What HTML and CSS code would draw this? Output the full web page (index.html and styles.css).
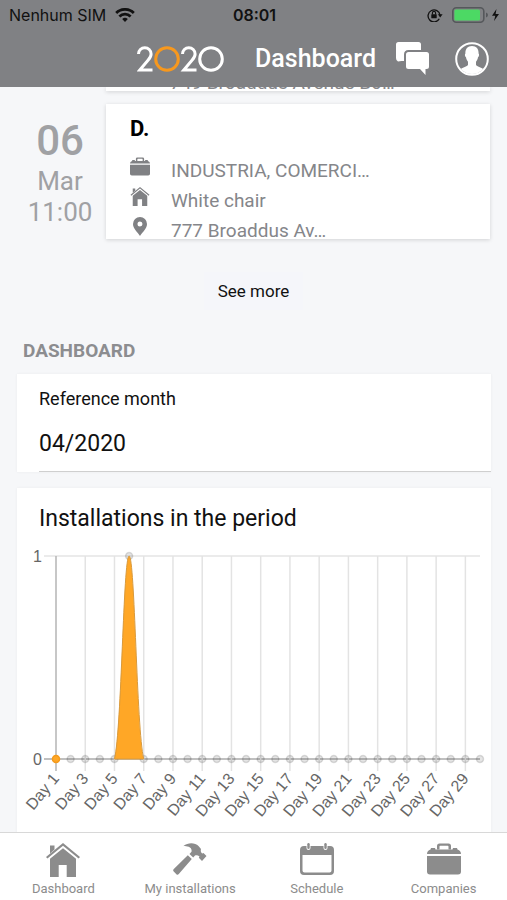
FILE: index.html
```html
<!DOCTYPE html>
<html lang="en">
<head>
    <meta charset="UTF-8">
    <meta name="viewport" content="width=device-width, initial-scale=1">
    <title>Dashboard</title>
    <link rel="stylesheet" href="styles.css">
</head>
<body>

<!-- shared icons -->
<svg class="sprite" aria-hidden="true">
    <symbol id="icon-home" viewBox="0 0 34 34">
        <path d="M4 2.500h4.500v4L4 10.500z"/>
        <path d="M0 14L17 0l17 14-1.400 1.600L17 2.800 1.400 15.600z"/>
        <path d="M17 5.200L30 15.800V34h-9.300V22h-8v12H4V15.800z"/>
    </symbol>
    <symbol id="icon-case" viewBox="0 0 34 31">
        <path d="M10 6V2.500Q10 0 12.500 0h9Q24 0 24 2.500V6h-2.500V3q0-.8-.8-.8h-7.400q-.8 0-.8.8v3z"/>
        <path d="M0 10.500Q0 7 3.500 6l.5-1.500h4L8.500 6h17l.5-1.500h4l.5 1.500q3.500 1 3.500 4.500z"/>
        <path d="M0 12.500h34V28q0 3-3 3H3q-3 0-3-3z"/>
    </symbol>
</svg>

<header class="header">
    <div class="status">
        <div class="status-side">
            <span>Nenhum SIM</span>
            <svg class="wifi" viewBox="0 0 20 14" aria-hidden="true">
                <g fill="none" stroke="#111" stroke-width="2.800">
                    <path d="M1.200 5a12.500 12.500 0 0 1 17.600 0"/>
                    <path d="M4.400 8.500a8 8 0 0 1 11.200 0"/>
                </g>
                <path fill="#111" d="M7.200 11a4 4 0 0 1 5.600 0L10 14z"/>
            </svg>
        </div>
        <span class="clock">08:01</span>
        <div class="status-side right">
            <svg class="lock" viewBox="0 0 16 14" aria-hidden="true">
                <path d="M12.300 10.800A6 6 0 1 1 13 7" fill="none" stroke="#111" stroke-width="1.300"/>
                <path d="M10.800 6.300h4.800L13.200 9.500z" fill="#111"/>
                <rect x="4.300" y="6.300" width="5.400" height="4" rx=".5" fill="#111"/>
                <path d="M5.400 6.500V5a1.600 1.600 0 0 1 3.200 0v1.500" fill="none" stroke="#111" stroke-width="1.100"/>
            </svg>
            <svg class="battery" viewBox="0 0 48 16" aria-hidden="true">
                <rect x=".8" y=".8" width="31" height="14.400" rx="3.500" fill="none" stroke="#55585b" stroke-width="1.600"/>
                <rect x="2.400" y="2.400" width="25.600" height="11.200" rx="1.500" fill="#4cd964"/>
                <path d="M34 5.500q2 .7 2 2.500t-2 2.500z" fill="#55585b"/>
                <path d="M44.500 2L40 8.800h3.300L42 14l5-7h-3.400z" fill="#111"/>
            </svg>
        </div>
    </div>
    <div class="toolbar">
        <svg class="logo" viewBox="0 0 87 26" role="img" aria-label="2020">
            <g fill="none" stroke="#fff" stroke-width="3">
                <path d="M1.500 8a6.300 6.300 0 0 1 12.600 0c0 3-1.500 4.500-3.500 6.800L2.800 24H15.500"/>
                <path d="M45.500 8a6.300 6.300 0 0 1 12.600 0c0 3-1.500 4.500-3.500 6.800L46.800 24H59.500"/>
                <circle cx="74" cy="13" r="11.300"/>
                <circle cx="30" cy="13" r="11.300" stroke="#f7981d"/>
            </g>
        </svg>
        <h1 class="title">Dashboard</h1>
        <button class="icon-btn" aria-label="Messages">
            <svg class="chat" viewBox="0 0 34 34" fill="#fff" aria-hidden="true">
                <path d="M2.500 0h20Q25 0 25 2.500V8H12.500Q8 8 8 12.500V19H5.500L2 19.500Q0 19 0 16V2.500Q0 0 2.500 0z"/>
                <path d="M12.500 10h18Q33 10 33 12.500v12q0 2.500-2.500 2.500H29.500v6L24 27H12.500Q10 27 10 24.500v-12Q10 10 12.500 10z"/>
            </svg>
        </button>
        <button class="icon-btn" aria-label="Profile">
            <svg class="user" viewBox="0 0 34 34" aria-hidden="true">
                <circle cx="17" cy="17" r="15.800" fill="none" stroke="#fff" stroke-width="2"/>
                <path fill="#fff" d="M17 4c4.500 0 6.800 3 6.600 7.500.8.400.6 3.300-.6 3.800-.4 2-1 3.300-2 4.500v3c.7 2 5.500 2.600 7.200 4.200A15 15 0 0 1 17 32 15 15 0 0 1 5.800 27c1.700-1.600 6.500-2.200 7.200-4.200v-3c-1-1.200-1.600-2.500-2-4.500-1.200-.5-1.400-3.400-.6-3.800C10.200 7 12.500 4 17 4z"/>
            </svg>
        </button>
    </div>
</header>

<main class="content">
    <div class="visit">
        <div class="card previous">
            <span>749 Broaddus Avenue Bo…</span>
        </div>
    </div>
    <div class="visit">
        <div class="date">
            <strong>06</strong>
            <span>Mar</span>
            <span>11:00</span>
        </div>
        <div class="card">
            <h2>D.</h2>
            <ul>
                <li><svg class="case"><use href="#icon-case"/></svg><span>INDUSTRIA, COMERCI…</span></li>
                <li><svg class="home"><use href="#icon-home"/></svg><span>White chair</span></li>
                <li>
                    <svg class="pin" viewBox="0 0 14 19"><path fill-rule="evenodd" d="M7 0a7 7 0 0 1 7 7c0 4.500-4.500 8-7 12C4.500 15 0 11.500 0 7a7 7 0 0 1 7-7zm0 4.500a2.500 2.500 0 1 0 0 5 2.500 2.500 0 0 0 0-5z"/></svg>
                    <span>777 Broaddus Av…</span>
                </li>
            </ul>
        </div>
    </div>

    <button class="more">See more</button>

    <h3 class="section">DASHBOARD</h3>

    <div class="panel month">
        <label for="month">Reference month</label>
        <input type="text" id="month" value="04/2020">
    </div>

    <div class="panel period">
        <h2>Installations in the period</h2>
        <svg id="chart" role="img" aria-label="Installations per day"></svg>
    </div>
</main>

<nav class="tabs">
    <a href="#dashboard">
        <svg class="tab-home" aria-hidden="true"><use href="#icon-home"/></svg>
        <span>Dashboard</span>
    </a>
    <a href="#installations">
        <svg class="tab-hammer" viewBox="0 0 34 32" aria-hidden="true">
            <path d="M10.500 3C15-.8 22-.6 25.500 3L28 6c-.6 2 0 3.500 1.300 4.600l1.200-.7 3 3.100-4.500 5-3.200-3.200.7-1.300c-1.500-1.300-3-1.500-4.500-1l-1.800 2-3.700-3.500 2-2.200c.5-2.300-.5-4-2.800-5C14 3.200 12.300 3.500 10.500 3z"/>
            <path d="M14.800 12.300l4 3.800L5.800 31q-1.200 1.300-2.400.2L.7 28.500q-1.200-1.300.1-2.500z"/>
            <path d="M15 11l5.500 5.300" stroke="#fff" stroke-width=".8"/>
        </svg>
        <span>My installations</span>
    </a>
    <a href="#schedule">
        <svg class="tab-calendar" viewBox="0 0 34 32" aria-hidden="true">
            <path fill-rule="evenodd" d="M4 3h2.500v2a2 2 0 0 0 4 0V3h13v2a2 2 0 0 0 4 0V3H30q4 0 4 4v21q0 4-4 4H4q-4 0-4-4V7q0-4 4-4zM2.500 12v15.500q0 2 2 2h25q2 0 2-2V12z"/>
            <rect x="7.300" y="0" width="2.400" height="6" rx="1.200"/>
            <rect x="24.300" y="0" width="2.400" height="6" rx="1.200"/>
        </svg>
        <span>Schedule</span>
    </a>
    <a href="#companies">
        <svg class="tab-case" aria-hidden="true"><use href="#icon-case"/></svg>
        <span>Companies</span>
    </a>
</nav>

<script src="chart.js"></script>
</body>
</html>
```
FILE: styles.css
```css
* {
    box-sizing: border-box;
}
body {
    font-family: Roboto, sans-serif;
    background: #f6f7f9;
    margin: 0;
    height: 100vh;
    display: flex;
    flex-direction: column;
    color: #111;
}
h1, h2, h3, ul {
    margin: 0;
    padding: 0;
}
button {
    font-family: inherit;
    border: none;
    background: none;
    padding: 0;
    cursor: pointer;
}
.sprite {
    display: none;
}

/* header */
.header {
    background: #808184;
    flex: none;
}
.status {
    display: flex;
    align-items: center;
    height: 30px;
    padding: 0 7px 0 9px;
    font-family: Inter, sans-serif;
    font-size: 16px;
}
.status-side {
    flex: 1;
    display: flex;
    align-items: center;
    gap: 9px;
}
.status-side.right {
    justify-content: flex-end;
}
.clock {
    font-weight: 600;
}
.wifi {
    width: 20px;
    height: 14px;
}
.lock {
    width: 16px;
    height: 14px;
}
.battery {
    width: 48px;
    height: 16px;
}
.toolbar {
    display: flex;
    align-items: center;
    justify-content: flex-end;
    height: 57px;
    padding: 0 18px 0 16px;
}
.logo {
    width: 87px;
    height: 26px;
    margin-right: 31px;
}
.title {
    color: #fff;
    font-size: 25px;
    font-weight: 500;
    margin-right: 20px;
}
.icon-btn {
    display: flex;
}
.icon-btn + .icon-btn {
    margin-left: 25px;
}
.icon-btn svg {
    width: 34px;
    height: 34px;
}

/* visits */
.content {
    flex: 1;
    min-height: 0;
    overflow: hidden;
}
.visit {
    display: flex;
    justify-content: flex-end;
    padding: 0 17px 0 16px;
    margin-bottom: 13px;
}
.date {
    width: 90px;
    padding: 12px 2px 0 0;
    display: flex;
    flex-direction: column;
    align-items: center;
    color: #a0a1a4;
    font-size: 26px;
    line-height: 31px;
}
.date strong {
    font-size: 42px;
    font-weight: 500;
    line-height: 50px;
}
.card {
    flex: 1;
    height: 135px;
    padding: 12px 24px 0;
    background: #fff;
    overflow: hidden;
    box-shadow: 0 1px 4px rgba(0, 0, 0, 0.15);
    color: #85868a;
    font-size: 19px;
}
.card.previous {
    display: flex;
    align-items: flex-end;
    height: 4px;
    margin-left: 90px;
    padding: 0 64px;
    line-height: 16px;
}
.card h2 {
    color: #000;
    font-size: 22px;
    font-weight: 700;
    line-height: 26px;
    margin-bottom: 13px;
}
.card li {
    display: flex;
    align-items: center;
    height: 30px;
}
.card li svg {
    width: 20px;
    height: 19px;
    margin-right: 21px;
    margin-bottom: 8px;
    fill: #808184;
}
.more {
    display: block;
    margin: 33px auto 0;
    padding: 0 14px;
    height: 38px;
    font-size: 17px;
    color: #111;
    background: #f5f6fa;
}
.section {
    margin: 31px 23px 13px;
    font-size: 19px;
    font-weight: 700;
    line-height: 20px;
    color: #8c8d90;
}

/* panels */
.panel {
    margin: 0 16px 16px 17px;
    background: #fff;
    box-shadow: 0 0 3px rgba(0, 0, 0, 0.05);
}
.month {
    padding: 14px 0 0 22px;
}
.month label {
    display: block;
    font-size: 18px;
    line-height: 21px;
}
.month input {
    display: block;
    width: 100%;
    height: 63px;
    padding: 12px 0 5px;
    border: none;
    border-bottom: 1px solid #cfcfcf;
    background: none;
    color: #111;
    font-family: inherit;
    font-size: 23px;
    outline: none;
}
.period {
    padding-top: 17px;
    min-height: 360px;
}
.period h2 {
    margin-left: 22px;
    font-size: 23px;
    font-weight: 400;
    line-height: 28px;
}
#chart {
    display: block;
    width: 100%;
    height: 300px;
}
#chart text {
    font-family: "Liberation Sans", sans-serif;
    font-size: 16px;
    fill: #666;
}

/* tabs */
.tabs {
    flex: none;
    display: grid;
    grid-template-columns: repeat(4, 1fr);
    height: 68px;
    background: #fff;
    border-top: 1px solid #d8d8d8;
}
.tabs a {
    display: flex;
    flex-direction: column;
    align-items: center;
    gap: 3px;
    padding-top: 10px;
    color: #8c8c8c;
    font-size: 13px;
    line-height: 18px;
    text-decoration: none;
}
.tabs svg {
    width: 34px;
    height: 34px;
    fill: #8c8c8c;
}
.tabs .tab-hammer, .tabs .tab-calendar, .tabs .tab-case {
    height: 32px;
    margin-bottom: 2px;
}
```
FILE: chart.js
```js
var chart = document.getElementById("chart");
var values = [];
for (var d = 1; d <= 30; d++) {
    values.push(d === 6 ? 1 : 0);
}

function line(x1, y1, x2, y2, color) {
    return `<line x1="${x1}" y1="${y1}" x2="${x2}" y2="${y2}" stroke="${color}" stroke-width="1.5"/>`;
}

function drawChart() {
    var left = 39, top = 23, bottom = 226;
    var right = chart.clientWidth - 11;
    var step = (right - left) / (values.length - 1);
    var html = "";

    // grid, a vertical line every two days
    html += line(left - 12, top, right, top, "#e5e5e5");
    html += line(left - 12, bottom, right, bottom, "#ababab");
    for (var i = 0; i < values.length; i += 2) {
        var x = left + i * step;
        html += line(x, top, x, bottom + 12, i === 0 ? "#b5b5b5" : "#e3e3e3");
        html += `<text text-anchor="end" transform="translate(${x + 4} ${bottom + 20}) rotate(-50)">Day ${i + 1}</text>`;
    }
    html += `<text x="${left - 14}" y="${top + 6}" text-anchor="end">1</text>`;
    html += `<text x="${left - 14}" y="${bottom + 6}" text-anchor="end">0</text>`;

    values.forEach(function(value, i) {
        var cx = left + i * step;
        var cy = bottom - value * (bottom - top);
        var fill = i === 0 ? "#ffa726" : "rgba(0,0,0,0.1)";
        var stroke = i === 0 ? "#f39a1c" : "rgba(0,0,0,0.13)";
        html += `<circle cx="${cx}" cy="${cy}" r="3.500" fill="${fill}" stroke="${stroke}" stroke-width="1.500"/>`;
    });

    // peak
    var peak = left + 5 * step;
    html += `<path d="M${peak - step} ${bottom}C${peak - step * 0.5} ${bottom - 30} ${peak - step * 0.4} ${top} ${peak} ${top}S${peak + step * 0.5} ${bottom - 30} ${peak + step} ${bottom}Z" fill="#ffa726" stroke="#d99a3c" stroke-width="1"/>`;
    chart.innerHTML = html;
}

drawChart();
window.addEventListener("resize", drawChart);
```
